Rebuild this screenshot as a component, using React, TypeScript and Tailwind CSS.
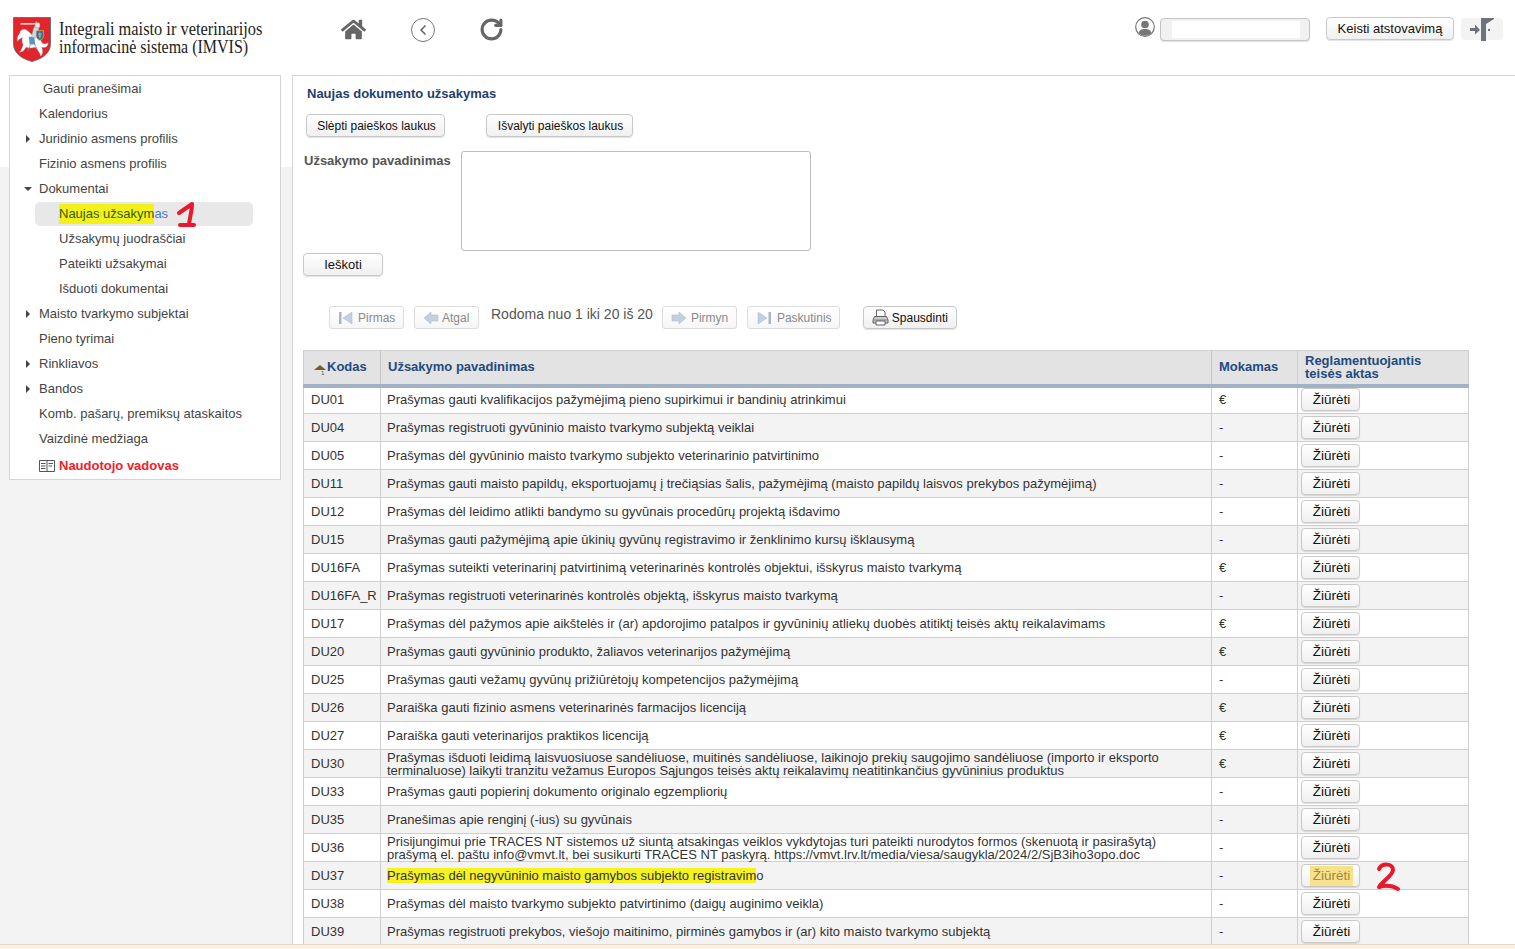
import type { FC, ReactNode } from 'react';
import { FaHome } from 'react-icons/fa';
import { ChevronLeft, RotateCw } from 'lucide-react';

const FONT = "font-['Liberation_Sans',Arial,sans-serif]";
const BTN =
  'inline-flex items-center justify-center rounded-[4px] border border-[#c8c8c8] bg-gradient-to-b from-white to-[#f0f0f0] text-[#111] shadow-[0_1px_1px_rgba(0,0,0,0.12)]';
const PAGER =
  'inline-flex items-center h-[23px] rounded-[3px] border border-[#dcdcdc] bg-gradient-to-b from-white to-[#f6f6f6] text-[#8a8a8a] text-xs';

type Row = { code: string; name: ReactNode; paid: boolean };

const rows: Row[] = [
  { code: 'DU01', name: 'Prašymas gauti kvalifikacijos pažymėjimą pieno supirkimui ir bandinių atrinkimui', paid: true },
  { code: 'DU04', name: 'Prašymas registruoti gyvūninio maisto tvarkymo subjektą veiklai', paid: false },
  { code: 'DU05', name: 'Prašymas dėl gyvūninio maisto tvarkymo subjekto veterinarinio patvirtinimo', paid: false },
  { code: 'DU11', name: 'Prašymas gauti maisto papildų, eksportuojamų į trečiąsias šalis, pažymėjimą (maisto papildų laisvos prekybos pažymėjimą)', paid: false },
  { code: 'DU12', name: 'Prašymas dėl leidimo atlikti bandymo su gyvūnais procedūrų projektą išdavimo', paid: false },
  { code: 'DU15', name: 'Prašymas gauti pažymėjimą apie ūkinių gyvūnų registravimo ir ženklinimo kursų išklausymą', paid: false },
  { code: 'DU16FA', name: 'Prašymas suteikti veterinarinį patvirtinimą veterinarinės kontrolės objektui, išskyrus maisto tvarkymą', paid: true },
  { code: 'DU16FA_R', name: 'Prašymas registruoti veterinarinės kontrolės objektą, išskyrus maisto tvarkymą', paid: false },
  { code: 'DU17', name: 'Prašymas dėl pažymos apie aikštelės ir (ar) apdorojimo patalpos ir gyvūninių atliekų duobės atitiktį teisės aktų reikalavimams', paid: true },
  { code: 'DU20', name: 'Prašymas gauti gyvūninio produkto, žaliavos veterinarijos pažymėjimą', paid: true },
  { code: 'DU25', name: 'Prašymas gauti vežamų gyvūnų prižiūrėtojų kompetencijos pažymėjimą', paid: false },
  { code: 'DU26', name: 'Paraiška gauti fizinio asmens veterinarinės farmacijos licenciją', paid: true },
  { code: 'DU27', name: 'Paraiška gauti veterinarijos praktikos licenciją', paid: true },
  {
    code: 'DU30',
    name: (
      <>
        Prašymas išduoti leidimą laisvuosiuose sandėliuose, muitinės sandėliuose, laikinojo prekių saugojimo sandėliuose (importo ir eksporto
        <br />
        terminaluose) laikyti tranzitu vežamus Europos Sąjungos teisės aktų reikalavimų neatitinkančius gyvūninius produktus
      </>
    ),
    paid: true,
  },
  { code: 'DU33', name: 'Prašymas gauti popierinį dokumento originalo egzempliorių', paid: false },
  { code: 'DU35', name: 'Pranešimas apie renginį (-ius) su gyvūnais', paid: false },
  {
    code: 'DU36',
    name: (
      <>
        Prisijungimui prie TRACES NT sistemos už siuntą atsakingas veiklos vykdytojas turi pateikti nurodytos formos (skenuotą ir pasirašytą)
        <br />
        prašymą el. paštu info@vmvt.lt, bei susikurti TRACES NT paskyrą. https://vmvt.lrv.lt/media/viesa/saugykla/2024/2/SjB3iho3opo.doc
      </>
    ),
    paid: false,
  },
  {
    code: 'DU37',
    name: (
      <>
        <span className="bg-[#f5f21e]">Prašymas dėl negyvūninio maisto gamybos subjekto registravim</span>o
      </>
    ),
    paid: false,
  },
  { code: 'DU38', name: 'Prašymas dėl maisto tvarkymo subjekto patvirtinimo (daigų auginimo veikla)', paid: false },
  { code: 'DU39', name: 'Prašymas registruoti prekybos, viešojo maitinimo, pirminės gamybos ir (ar) kito maisto tvarkymo subjektą', paid: false },
];

const menu = [
  { text: 'Kalendorius' },
  { text: 'Juridinio asmens profilis', arrow: 'right' },
  { text: 'Fizinio asmens profilis' },
  { text: 'Dokumentai', arrow: 'down' },
];

const menu2 = [
  { text: 'Maisto tvarkymo subjektai', arrow: 'right' },
  { text: 'Pieno tyrimai' },
  { text: 'Rinkliavos', arrow: 'right' },
  { text: 'Bandos', arrow: 'right' },
  { text: 'Komb. pašarų, premiksų ataskaitos' },
  { text: 'Vaizdinė medžiaga' },
];

// Vytis coat of arms, simplified
const Logo = () => (
  <svg width="38" height="45" viewBox="0 0 41 46" preserveAspectRatio="none" className="shrink-0">
    <path d="M.5 .5H40.500V27C40.500 38 30 43 20.500 45.500C11 43 .5 38 .5 27Z" fill="#e3242b" stroke="#6f6f6f" strokeWidth="1" />
    {/* sword */}
    <path d="M8 7H27" stroke="#f2f2f2" strokeWidth="1.400" />
    <path d="M25 4.500V9.500" stroke="#d9b93f" strokeWidth="1.400" />
    {/* horse */}
    <path
      d="M7 17C8 13 11 12 14 13C18 15 20 19 24 20C28 21 30 23 31 26C33 28 36 28 38 26C38 30 35 32 31 31C32 34 33 37 30 40C29 37 27 34 24 31C20 32 17 32 14 31C12 34 11 36 7 36C9 34 10 31 11 28C9 26 10 23 10 21C8 22 6 23 5 25C4 22 5 19 7 17Z"
      fill="#fff"
      stroke="#9aa5ae"
      strokeWidth="0.400"
    />
    {/* rider */}
    <path d="M25 7L28 12L24 22L20 20L22 12Z" fill="#cfd8df" stroke="#8ea0ad" strokeWidth="0.400" />
    <rect x="24" y="6" width="5" height="5" rx="1.500" fill="#dfe5ea" stroke="#8ea0ad" strokeWidth="0.400" />
    {/* shield */}
    <path d="M25 14H33V19C33 22 31 23 29 24C27 23 25 22 25 19Z" fill="#2a6cb5" stroke="#e2c440" strokeWidth="0.700" />
    <path d="M29 15.500V22M27 17.500H31M27.500 19.500H30.500" stroke="#e8cc45" strokeWidth="0.800" />
    {/* saddle cloth */}
    <path d="M17 20L23 21L24 28L18 28Z" fill="#5f93bf" />
    <path d="M19 28L16 35M23 27L27 35" stroke="#7a8b96" strokeWidth="0.800" />
  </svg>
);

const ExitIcon = () => (
  <svg width="24" height="24" viewBox="0 0 24 24">
    <path d="M11 1H24V2L16 7V24H11Z" fill="#6d7378" />
    <path d="M0 11H5V7.500L10 13L5 17.500V14H0Z" fill="#6d7378" />
    <rect x="18" y="12" width="2" height="2" fill="#6d7378" />
  </svg>
);

const UserIcon = () => (
  <svg width="20" height="20" viewBox="0 0 20 20">
    <circle cx="10" cy="10" r="9.300" fill="#fff" stroke="#777" strokeWidth="1.200" />
    <circle cx="10" cy="7.500" r="3.800" fill="#777" />
    <path d="M3.500 16C4.500 12.500 7 12 10 12S15.500 12.500 16.500 16C13 19.500 7 19.500 3.500 16Z" fill="#777" />
  </svg>
);

const PrinterIcon = () => (
  <svg width="17" height="17" viewBox="0 0 17 17" className="mr-[3px]">
    <path d="M4.500 1H11L13 3V8H4.500Z" fill="#fff" stroke="#555" strokeWidth="0.900" />
    <path d="M2.500 7.500H14.500L16 11V14H1V11Z" fill="#c9ced3" stroke="#555" strokeWidth="0.900" />
    <path d="M1.500 11H15.500" stroke="#777" strokeWidth="0.800" />
    <path d="M4 12H13V16H4Z" fill="#fff" stroke="#555" strokeWidth="0.900" />
  </svg>
);

const First = () => (
  <svg width="16" height="14" viewBox="0 0 16 14">
    <rect x="1" y="1" width="2.500" height="12" fill="#a9b6c4" />
    <path d="M14 1V13L5 7Z" fill="#c3d0dd" stroke="#a9b6c4" strokeWidth="0.500" />
  </svg>
);

const Arrow = ({ flip }: { flip?: boolean }) => (
  <svg width="16" height="14" viewBox="0 0 16 14" className={flip ? '-scale-x-100' : ''}>
    <path d="M1 7L8 1V4H15V10H8V13Z" fill="#c3d0dd" stroke="#a9b6c4" strokeWidth="0.500" />
  </svg>
);

const Caret: FC<{ dir?: string }> = ({ dir }) => {
  if (dir === 'right') return <span className="h-0 w-0 border-y-[4px] border-l-[4px] border-y-transparent border-l-[#444]" />;
  if (dir === 'down') return <span className="h-0 w-0 border-x-[4px] border-t-[4px] border-x-transparent border-t-[#444]" />;
  return null;
};

const MenuItem: FC<{ text: string; arrow?: string }> = ({ text, arrow }) => (
  <div className="flex h-[25px] items-center text-[#444]">
    <span className="flex w-[29px] justify-center pl-[6px]">
      <Caret dir={arrow} />
    </span>
    <span>{text}</span>
  </div>
);

const Sidebar = () => (
  <aside className="ml-[9px] h-[405px] w-[272px] shrink-0 border border-[#d4d4d4] bg-white text-[13px]">
    <div className="flex h-[25px] items-center pl-[33px] text-[#444]">Gauti pranešimai</div>
    {menu.map((m) => (
      <MenuItem key={m.text} text={m.text} arrow={m.arrow} />
    ))}
    <div className="ml-[25px] mt-[1px] flex h-[24px] w-[218px] items-center rounded-[5px] bg-[#e8e8e8] pl-[24px] text-[#4a7bd0]">
      <span className="bg-[#f2f21a] text-[#3a5a00]">Naujas užsakym</span>as
      <svg width="24" height="28" viewBox="0 0 24 28" className="ml-[7px]">
        <path d="M4 13L17 4C17 10 15 17 14 24M5 25H19" fill="none" stroke="#e8192c" strokeWidth="4" strokeLinecap="round" strokeLinejoin="round" />
      </svg>
    </div>
    <div className="flex h-[25px] items-center pl-[49px] text-[#444]">Užsakymų juodraščiai</div>
    <div className="flex h-[25px] items-center pl-[49px] text-[#444]">Pateikti užsakymai</div>
    <div className="flex h-[25px] items-center pl-[49px] text-[#444]">Išduoti dokumentai</div>
    {menu2.map((m) => (
      <MenuItem key={m.text} text={m.text} arrow={m.arrow} />
    ))}
    <div className="flex h-[29px] items-center pl-[29px] font-bold text-[#f3202a]">
      <svg width="16" height="12" viewBox="0 0 16 12" className="mr-[4px]" fill="none" stroke="#555">
        <path d="M.5 .5H15.500V11.500H.5ZM8 .5V11.500M2 3.500H6.500M2 6H6.500M2 8.500H6.500M9.500 3.500H14M9.500 6H13" />
      </svg>
      Naudotojo vadovas
    </div>
  </aside>
);

const Header = () => (
  <header className="flex h-[75px] items-start">
    <div className="ml-[13px] mt-[17px]">
      <Logo />
    </div>
    <div className="ml-[8px] mt-[20px] w-[260px] font-['Liberation_Serif',serif] text-[19.500px] leading-[18px] text-[#222]">
      <div className="origin-left scale-x-[0.84] whitespace-nowrap">Integrali maisto ir veterinarijos</div>
      <div className="origin-left scale-x-[0.82] whitespace-nowrap">informacinė sistema (IMVIS)</div>
    </div>
    <FaHome size={25} className="ml-[22px] mt-[17px] text-[#666]" />
    <div className="ml-[45px] mt-[18px] flex h-[24px] w-[24px] items-center justify-center rounded-full border border-[#777]">
      <ChevronLeft size={16} strokeWidth={2.500} className="text-[#666]" />
    </div>
    <RotateCw size={25} strokeWidth={3} className="ml-[44px] mt-[17px] text-[#666]" />
    <div className="ml-auto mt-[17px] flex items-start">
      <UserIcon />
      <div className="ml-[5px] mt-[1px] h-[23px] w-[150px] rounded-[4px] border border-[#c4c4c4] bg-[#f1f1f1] px-[11px] pt-[2px] shadow-[0_1px_1px_rgba(0,0,0,0.12)]">
        <div className="h-[17px] w-[128px] bg-white" />
      </div>
      <button className={`${BTN} ml-[16px] h-[23px] w-[128px] text-[13px]`}>Keisti atstovavimą</button>
      <div className="ml-[7px] mr-[12px] mt-[1px] flex h-[22px] w-[42px] items-center justify-center rounded-[4px] bg-[#f3f3f3]">
        <ExitIcon />
      </div>
    </div>
  </header>
);

const Toolbar = () => (
  <div className="ml-[36px] mt-[30px] flex h-[24px] items-start">
    <span className={`${PAGER} w-[75px] pl-[8px]`}>
      <First />
      <span className="ml-[4px]">Pirmas</span>
    </span>
    <span className={`${PAGER} ml-[10px] w-[65px] pl-[8px]`}>
      <Arrow />
      <span className="ml-[3px]">Atgal</span>
    </span>
    <span className="ml-[12px] text-[14px] leading-[16px] text-[#555]">Rodoma nuo 1 iki 20 iš 20</span>
    <span className={`${PAGER} ml-[9px] w-[75px] pl-[8px]`}>
      <Arrow flip />
      <span className="ml-[4px]">Pirmyn</span>
    </span>
    <span className={`${PAGER} ml-[10px] w-[93px] pl-[8px]`}>
      <span className="-scale-x-100">
        <First />
      </span>
      <span className="ml-[5px]">Paskutinis</span>
    </span>
    <button className={`${BTN} ml-[23px] h-[23px] w-[94px] text-xs`}>
      <PrinterIcon />
      Spausdinti
    </button>
  </div>
);

const Table = () => (
  <table className="ml-[10px] mt-[20px] w-[1166px] table-fixed border-collapse text-[13px] text-[#333]">
    <colgroup>
      <col className="w-[77px]" />
      <col className="w-[831px]" />
      <col className="w-[86px]" />
      <col />
    </colgroup>
    <thead>
      <tr className="h-[35px] border border-b-[4px] border-[#cfcfcf] border-b-[#a1b1c6] bg-[#e3e3e3] text-left font-bold text-[#234a80]">
        <th className="pl-[10px] pb-[2px] align-middle">
          <span className="relative inline-flex items-center">
            <span className="mr-[1px] mt-[3px] h-0 w-0 border-x-[6px] border-b-[5px] border-x-transparent border-b-[#7a5a2c]" />
            Kodas
            <span className="absolute left-[7px] top-[13px] text-[6px] font-normal leading-[6px] text-[#555]">1</span>
          </span>
        </th>
        <th className="border-l border-[#c4c4c4] pl-[7px] pb-[2px]">Užsakymo pavadinimas</th>
        <th className="border-l border-[#c4c4c4] pl-[7px] pb-[2px]">Mokamas</th>
        <th className="border-l border-[#cfcfcf] pl-[7px] pt-[3px] align-top leading-[13px]">
          Reglamentuojantis
          <br />
          teisės aktas
        </th>
      </tr>
    </thead>
    <tbody>
      {rows.map((r, i) => (
        <tr key={r.code} className={`h-[28px] border-b border-[#cfcfcf] ${i % 2 ? 'bg-[#f3f3f3]' : 'bg-white'} ${i === 0 ? '[&>td]:pb-[2px]' : ''}`}>
          <td className="border-x border-[#cfcfcf] pl-[7px] whitespace-nowrap">{r.code}</td>
          <td className="border-r border-[#cfcfcf] pl-[6px] leading-[13px] whitespace-nowrap">{r.name}</td>
          <td className="border-r border-[#cfcfcf] pl-[7px]">{r.paid ? '€' : '-'}</td>
          <td className="relative border-r border-[#cfcfcf] pl-[3px]">
            <button className={`${BTN} h-[23px] w-[59px] pl-[2px] pt-[1px] align-middle text-[13.500px]`}>
              {r.code === 'DU37' ? <span className="bg-[#f9e08a] px-[3px] text-[#9a8a3a]">Žiūrėti</span> : 'Žiūrėti'}
            </button>
            {r.code === 'DU37' && (
              <svg width="26" height="30" viewBox="0 0 26 30" className="absolute left-[77px] top-0">
                <path d="M4 7C7 1 18 1 18 8C18 13 8 19 4 25C11 23 18 24 23 27" fill="none" stroke="#e8192c" strokeWidth="4" strokeLinecap="round" strokeLinejoin="round" />
              </svg>
            )}
          </td>
        </tr>
      ))}
    </tbody>
  </table>
);

export default function App() {
  return (
    <div className={`${FONT} relative h-[949px] w-full overflow-hidden bg-[linear-gradient(#fff_167px,#f3f3f3_167px)] text-[13px]`}>
      <Header />
      <div className="flex h-[874px] items-start">
        <Sidebar />
        <main className="ml-[11px] h-full flex-1 border-l border-t border-[#d4d4d4] bg-white">
          <div className="ml-[14px] mt-[10px] font-bold leading-[15px] text-[#1d3f70]">Naujas dokumento užsakymas</div>
          <div className="ml-[13px] mt-[13px] flex">
            <button className={`${BTN} h-[23px] w-[139px] pl-[2px] pt-[1px] text-xs`}>Slėpti paieškos laukus</button>
            <button className={`${BTN} ml-[41px] h-[23px] w-[147px] pl-[2px] pt-[1px] text-xs`}>Išvalyti paieškos laukus</button>
          </div>
          <div className="ml-[11px] mt-[14px] flex items-start">
            <label className="w-[157px] font-bold text-[#555]">Užsakymo pavadinimas</label>
            <div className="h-[100px] w-[350px] rounded-[3px] border border-[#bdbdbd] bg-white" />
          </div>
          <button className={`${BTN} ml-[10px] mt-[2px] block h-[23px] w-[80px] text-[13px]`}>Ieškoti</button>
          <Toolbar />
          <Table />
        </main>
      </div>
      <div className="absolute bottom-0 left-0 right-0 h-[5px] border-t border-[#e8d8c8] bg-[#fbeee2]" />
    </div>
  );
}
